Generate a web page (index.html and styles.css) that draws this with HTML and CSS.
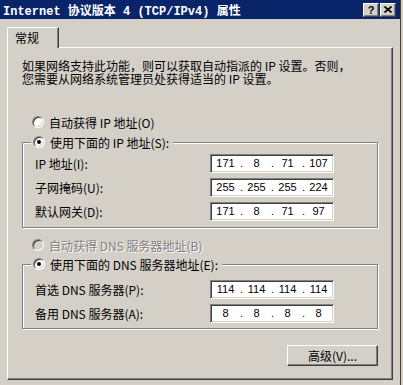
FILE: index.html
```html
<!DOCTYPE html>
<html lang="zh-CN">
<head>
  <meta charset="UTF-8">
  <title>Internet 协议版本 4 (TCP/IPv4) 属性</title>
  <link rel="stylesheet" href="styles.css">
</head>
<body>

<div class="window">
  <div class="titlebar">
    <span class="title">Internet 协议版本 4 (TCP/IPv4) 属性</span>
    <div class="caption-buttons">
      <span class="cap-btn">?</span>
      <span class="cap-btn">
        <svg width="8" height="7" viewBox="0 0 8 7">
          <path d="M0.5 0.5 L7.5 6.5 M7.5 0.5 L0.5 6.5" stroke="#000" stroke-width="1.6" fill="none"/>
        </svg>
      </span>
    </div>
  </div>

  <div class="client">
    <div class="tabs">
      <div class="tab">常规</div>
    </div>

    <div class="panel">
      <p class="desc">如果网络支持此功能，则可以获取自动指派的 IP 设置。否则，<br>您需要从网络系统管理员处获得适当的 IP 设置。</p>

      <div class="radio-row first"><span class="radio"></span>自动获得 IP 地址(O)</div>

      <fieldset class="group ip-group">
        <legend><span class="radio checked"></span>使用下面的 IP 地址(S):</legend>
        <div class="field-row">
          <label>IP 地址(I):</label>
          <div class="ip-box"><span class="oct">171</span><span class="dot">.</span><span class="oct">8</span><span class="dot">.</span><span class="oct">71</span><span class="dot">.</span><span class="oct">107</span></div>
        </div>
        <div class="field-row">
          <label>子网掩码(U):</label>
          <div class="ip-box"><span class="oct">255</span><span class="dot">.</span><span class="oct">255</span><span class="dot">.</span><span class="oct">255</span><span class="dot">.</span><span class="oct">224</span></div>
        </div>
        <div class="field-row">
          <label>默认网关(D):</label>
          <div class="ip-box"><span class="oct">171</span><span class="dot">.</span><span class="oct">8</span><span class="dot">.</span><span class="oct">71</span><span class="dot">.</span><span class="oct">97</span></div>
        </div>
      </fieldset>

      <div class="radio-row disabled"><span class="radio"></span>自动获得 DNS 服务器地址(B)</div>

      <fieldset class="group dns-group">
        <legend><span class="radio checked"></span>使用下面的 DNS 服务器地址(E):</legend>
        <div class="field-row">
          <label>首选 DNS 服务器(P):</label>
          <div class="ip-box"><span class="oct">114</span><span class="dot">.</span><span class="oct">114</span><span class="dot">.</span><span class="oct">114</span><span class="dot">.</span><span class="oct">114</span></div>
        </div>
        <div class="field-row">
          <label>备用 DNS 服务器(A):</label>
          <div class="ip-box"><span class="oct">8</span><span class="dot">.</span><span class="oct">8</span><span class="dot">.</span><span class="oct">8</span><span class="dot">.</span><span class="oct">8</span></div>
        </div>
      </fieldset>

      <div class="actions">
        <button class="btn">高级(V)...</button>
      </div>
    </div>
  </div>
</div>

</body>
</html>
```

FILE: styles.css
```css
html, body {
  margin: 0;
  height: 100%;
  background-color: #d4d0c8;
}

body {
  font-family: "Noto Sans CJK SC", sans-serif;
  font-size: 12px;
  color: #000;
}

.window {
  width: 400px;
  height: 385px;
  border-right: 1px solid #404040;
  background-color: #d4d0c8;
}

.titlebar {
  height: 19px;
  background-color: #0a246a;
  display: flex;
  align-items: center;
  justify-content: space-between;
  padding: 0 4px 0 3px;
}

.title {
  color: #fff;
  font-family: "Liberation Mono", "Noto Sans CJK SC", monospace;
  font-weight: bold;
  font-size: 12px;
  white-space: nowrap;
}

.caption-buttons {
  display: flex;
  gap: 1px;
}

.cap-btn {
  width: 16px;
  height: 14px;
  box-sizing: border-box;
  display: flex;
  align-items: center;
  justify-content: center;
  background-color: #d4d0c8;
  border: 1px solid;
  border-color: #fff #404040 #404040 #fff;
  box-shadow: inset -1px -1px 0 #808080;
  font-family: "Liberation Sans", sans-serif;
  font-weight: bold;
  font-size: 11px;
  line-height: 12px;
}

.client {
  padding: 8px 0 0 7px;
}

.tabs {
  display: flex;
}

.tab {
  position: relative;
  z-index: 1;
  width: 52px;
  height: 21px;
  box-sizing: border-box;
  margin-bottom: -1px;
  padding: 3px 0 0 7px;
  background-color: #d4d0c8;
  border: 1px solid;
  border-bottom: none;
  border-color: #fff #404040 #fff #fff;
  border-top-left-radius: 2px;
  box-shadow: inset -1px 0 0 #808080;
  line-height: 14px;
}

.panel {
  width: 386px;
  height: 333px;
  box-sizing: border-box;
  padding: 11px 14px 0 14px;
  border: 1px solid;
  border-color: #fff #404040 #404040 #fff;
  box-shadow: inset -1px -1px 0 #808080;
}

.desc {
  margin: 0;
  line-height: 13px;
  white-space: nowrap;
}

.radio-row {
  display: flex;
  align-items: center;
  height: 16px;
  padding-left: 10px;
  white-space: nowrap;
}

.radio-row.first {
  margin-top: 29px;
}

.radio-row.disabled {
  margin-top: 9px;
  color: #808080;
  text-shadow: 1px 1px 0 #fff;
}

.radio {
  display: inline-block;
  position: relative;
  width: 12px;
  height: 12px;
  box-sizing: border-box;
  margin-right: 5px;
  border-radius: 50%;
  border: 1px solid;
  border-color: #808080 #fff #fff #808080;
  background-color: #fff;
  box-shadow: inset 1px 1px 0 #404040, inset -1px -1px 0 #d4d0c8;
  flex-shrink: 0;
}

.radio.checked::after {
  content: "";
  position: absolute;
  left: 3px;
  top: 3px;
  width: 4px;
  height: 4px;
  border-radius: 50%;
  background-color: #000;
}

.disabled .radio {
  background-color: #d4d0c8;
}

.group {
  width: 356px;
  box-sizing: border-box;
  margin: 4px 0 0 0;
  padding: 1px 0 4px 0;
  min-width: 0;
  border: 1px solid #808080;
  box-shadow: inset 1px 1px 0 #fff, 1px 1px 0 #fff;
}

.group legend {
  display: flex;
  align-items: center;
  height: 16px;
  margin-left: 8px;
  padding: 0 4px 0 2px;
  background-color: #d4d0c8;
  white-space: nowrap;
}

.dns-group {
  margin-top: 3px;
  padding-top: 5px;
  padding-bottom: 3px;
}

.field-row {
  display: flex;
  align-items: center;
  height: 24px;
  padding-left: 12px;
}

.field-row label {
  width: 175px;
  white-space: nowrap;
}

.ip-box {
  width: 124px;
  height: 19px;
  box-sizing: border-box;
  display: flex;
  align-items: center;
  overflow: hidden;
  background-color: #fff;
  border: 1px solid;
  border-color: #808080 #fff #fff #808080;
  box-shadow: inset 1px 1px 0 #404040, inset -1px -1px 0 #d4d0c8;
  font-family: "Liberation Sans", sans-serif;
  font-size: 11px;
  padding-left: 1px;
}

.oct {
  width: 27px;
  flex-shrink: 0;
  text-align: center;
}

.dot {
  width: 4px;
  flex-shrink: 0;
  text-align: right;
}

.actions {
  display: flex;
  justify-content: flex-end;
  margin-top: 16px;
}

.btn {
  width: 91px;
  height: 21px;
  margin: 0;
  padding: 0;
  font-family: "Noto Sans CJK SC", sans-serif;
  font-size: 12px;
  color: #000;
  background-color: #d4d0c8;
  border: 1px solid;
  border-color: #fff #404040 #404040 #fff;
  box-shadow: inset -1px -1px 0 #808080;
}
```
